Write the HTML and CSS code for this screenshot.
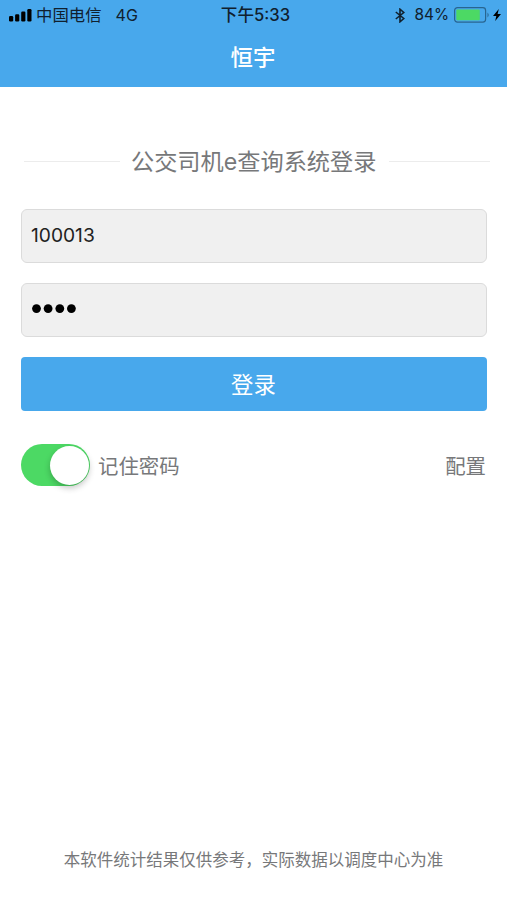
FILE: index.html
```html
<!DOCTYPE html>
<html lang="zh-CN">
<head>
<meta charset="utf-8">
<title>恒宇</title>
<link rel="stylesheet" href="styles.css">
</head>
<body>
<header class="top">
  <div class="status">
    <div class="status-left">
      <svg class="signal" width="23" height="14" viewBox="0 0 23 14"><rect x="0" y="8" width="4.2" height="5.5" rx="1.2"/><rect x="6.1" y="6.3" width="4.2" height="7.2" rx="1.2"/><rect x="12.2" y="3.5" width="4.2" height="10" rx="1.2"/><rect x="18.3" y="1" width="4.2" height="12.5" rx="1.2"/></svg>
      <span class="carrier">中国电信</span><span class="net">4G</span>
    </div>
    <span class="time">下午5:33</span>
    <div class="status-right">
      <svg width="10" height="15" viewBox="0 0 10 15" fill="none" stroke="#10202e" stroke-width="1.6"><path d="M.8 4l8 6.5L5 13.8V1.2l3.8 3.3-8 6.5"/></svg>
      <span class="percent">84%</span>
      <svg width="36" height="16" viewBox="0 0 36 16"><rect x=".6" y=".7" width="31" height="14.4" rx="2.8" fill="none" stroke="#286590" stroke-width="1.2"/><rect x="2.3" y="2.5" width="23.5" height="10.8" rx="1" fill="#4cd964"/><path d="M33.5 5.5q2.4 2.5 0 5z" fill="#286590"/></svg>
      <svg class="bolt" width="8" height="12" viewBox="0 0 8 12"><path d="M5.8 0L0 7h3.3L2.2 12 8 4.9H4.6z"/></svg>
    </div>
  </div>
  <h1 class="title">恒宇</h1>
</header>
<main class="login">
  <h2 class="heading"><span class="heading-text">公交司机e查询系统登录</span></h2>
  <div class="field">100013</div>
  <div class="field">
    <svg class="dots" width="46" height="10" viewBox="0 0 46 10"><circle cx="5.5" cy="4.6" r="4.4"/><circle cx="17.1" cy="4.6" r="4.4"/><circle cx="28.8" cy="4.6" r="4.4"/><circle cx="40.4" cy="4.6" r="4.4"/></svg>
  </div>
  <button class="submit">登录</button>
  <div class="options">
    <span class="switch"></span><span class="remember">记住密码</span><span class="config">配置</span>
  </div>
</main>
<footer class="note">本软件统计结果仅供参考，实际数据以调度中心为准</footer>
</body>
</html>
```
FILE: styles.css
```css
* { box-sizing: border-box; }
body { margin: 0; height: 900px; display: flex; flex-direction: column; background: #fff; color: #77787a; font-family: Inter, "Noto Sans CJK SC", sans-serif; overflow: hidden; }
.top { height: 87px; background: #48a8ec; }
.status { height: 30px; padding: 0 6px 0 9px; display: grid; grid-template-columns: 1fr auto 1fr; align-items: center; color: #10202e; font-size: 16px; line-height: 30px; }
.status-left, .status-right { display: flex; align-items: center; }
.status-right { justify-content: flex-end; }
.carrier { margin-left: 4px; font-size: 16.4px; }
.net { margin-left: 14px; font-size: 16px; }
.time { padding-left: 1px; font-weight: 500; font-size: 16.6px; }
.percent { margin: 0 5px 0 9px; font-size: 15.4px; }
.bolt { margin-left: 3px; }
.title { margin: 0; padding-right: 1px; color: #fff; font-size: 22.4px; line-height: 56px; font-weight: 500; text-align: center; }
.login { flex: 1; margin-top: -1px; padding: 53px 20px 0 21px; }
.heading { height: 44px; margin: 0 -3px 26px 3px; display: flex; align-items: center; font-size: 23.2px; font-weight: 400; line-height: 44px; }
.heading-text { padding-top: 2px; margin: 0 13px 0 11px; }
.heading::before { content: ""; width: 96px; height: 1px; background: #ececec; }
.heading::after { content: ""; flex: 1; height: 1px; background: #ececec; }
.field { height: 54px; margin-bottom: 20px; padding: 0 9px; display: flex; align-items: center; border: 1px solid #dbdbdb; border-radius: 6px; background: #f0f0f0; color: #222; font-size: 19.2px; line-height: 50px; padding-bottom: 2px; }
.dots { fill: #000; }
.submit { display: block; width: 100%; height: 54px; padding: 0 1px 0 0; border: 0; border-radius: 4px; background: #48a8ec; color: #fff; font: inherit; font-size: 22.4px; line-height: 55px; }
.options { height: 42px; margin-top: 33px; display: flex; align-items: center; font-size: 20.4px; }
.switch { width: 69px; height: 42px; padding: 2px 1px; border-radius: 21px; background: #4cd964; display: flex; justify-content: flex-end; }
.switch::after { content: ""; width: 39px; height: 39px; border-radius: 50%; background: #fff; box-shadow: 0 3px 6px rgba(0,0,0,.24); }
.remember { margin-left: 8px; }
.config { margin-left: auto; margin-right: 1px; }
.note { height: 82px; text-align: center; font-size: 16.5px; line-height: 85px; white-space: nowrap; }
```
